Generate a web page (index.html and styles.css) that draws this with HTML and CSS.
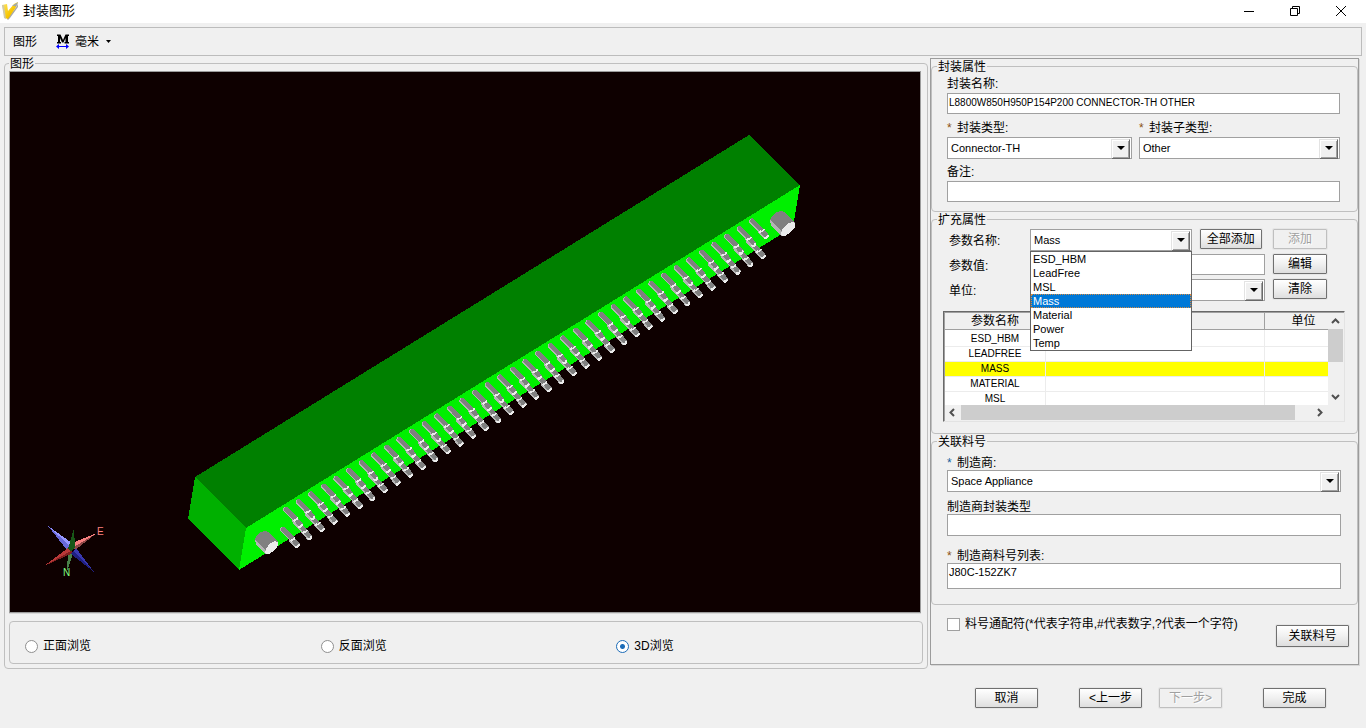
FILE: index.html
```html
<!DOCTYPE html>
<html lang="zh-CN">
<head>
<meta charset="utf-8">
<title>封装图形</title>
<link rel="stylesheet" href="styles.css">
</head>
<body>
<header class="titlebar">
  <svg class="app-icon" width="18" height="19" viewBox="0 0 18 19" aria-hidden="true">
    <defs><linearGradient id="gold" x1="0" y1="0" x2="1" y2="1"><stop offset="0" stop-color="#ffe66a"/><stop offset=".6" stop-color="#f7c600"/><stop offset="1" stop-color="#c98a1c"/></linearGradient></defs>
    <path d="M6 18 16 5l1-3 0 4-8 11-2 2z" fill="#a9a9a9"/>
    <path d="M1 4 6 3l1 7 6-7 4-2-2 5-8 12-3-1z" fill="url(#gold)"/>
    <path d="m1 4 2 13 2 1L3 4z" fill="#cfc9a8"/>
    <path d="m11 5 6-4-2 5-1-1z" fill="#9fa8ae"/>
  </svg>
  <h1 class="title">封装图形</h1>
  <div class="window-controls">
    <button class="window-button" type="button" aria-label="最小化"><svg width="12" height="12" viewBox="0 0 12 12"><path d="M1 6.500h10" stroke="#000"/></svg></button>
    <button class="window-button" type="button" aria-label="还原"><svg width="12" height="12" viewBox="0 0 12 12" fill="none" stroke="#000"><path d="M1.500 3.500h7v7h-7zM3.500 3.500v-2h7v7h-2"/></svg></button>
    <button class="window-button" type="button" aria-label="关闭"><svg width="12" height="12" viewBox="0 0 12 12"><path d="m1 1 10 10M11 1 1 11" stroke="#000"/></svg></button>
  </div>
</header>

<nav class="toolbar">
  <button class="tool" type="button">图形</button>
  <button class="tool" type="button">
    <svg width="13" height="15" viewBox="0 0 13 15" aria-hidden="true">
      <path d="M1 .5h3.500l2.500 5.500 2.500-5.500H13v1.500h-1v6h1v1.500H8.500V8h1V4L7.500 8.500h-1.500L4 4v4h1v1.500H1V8h1V2H1z" fill="#000"/>
      <path d="M1 12.500h11" stroke="#00f"/><path d="m0 12.500 3-2.500v5zM13 12.500 10 10v5z" fill="#00f"/>
    </svg>
    <span>毫米</span>
    <svg width="7" height="4" viewBox="0 0 7 4" aria-hidden="true"><path d="M1 0h5L3.500 3z"/></svg>
  </button>
</nav>

<main class="workspace">
  <fieldset class="group viewer">
    <legend>图形</legend>
    <svg class="scene" viewBox="10 72 910 540" preserveAspectRatio="xMidYMid slice" role="img" aria-label="3D">
      <defs>
        <g id="pin">
          <path d="M8.500 13.500 14.500 10.500 20 17 15 20.500z" fill="#808080"/>
          <path d="M8.500 13.500 10 12.500 16 19.500 15 20.500z" fill="#b4b4b4"/>
          <path d="M14.500 19.500 15.500 18.500 17 18.500 18.500 16.500 20 17.500 19 19.500 17 21H15.500z" fill="#ebebeb"/>
          <path d="M0 2 1.500 0H4L14.500 10.500 10 14 0 4z" fill="#b4b4b4"/>
          <path d="M1 2 2 0H4L14.500 10.500 11 13.500 1 3z" fill="#808080"/>
          <path d="M9.500 13.500 11 12 12.500 12.500 14.500 10 15.500 11 14.500 13 13 13.500 11.500 14.500 10.500 14.500z" fill="#ebebeb"/>
        </g>
        <g id="pins2"><use href="#pin" x="12.600" y="-7.800"/><use href="#pin"/></g>
        <g id="pins4"><use href="#pins2" x="25.200" y="-15.600"/><use href="#pins2"/></g>
        <g id="pins8"><use href="#pins4" x="50.400" y="-31.200"/><use href="#pins4"/></g>
        <g id="pins16"><use href="#pins8" x="100.800" y="-62.400"/><use href="#pins8"/></g>
        <g id="pins32"><use href="#pins16" x="201.600" y="-124.800"/><use href="#pins16"/></g>
        <g id="pin-row"><use href="#pins2" x="453.600" y="-280.800"/><use href="#pins4" x="403.200" y="-249.600"/><use href="#pins32"/></g>
        <g id="stud">
          <path d="m0 9 2-4 4-4 5-1 3 1 11 10-1 4-9 10h-3L1 15z" fill="#808080"/>
          <path d="m0 9 1 6 11 10 1-3z" fill="#b4b4b4"/>
          <path d="m11 23 1-4 5-6 5-2 3 1v4l-4 5-6 4h-3z" fill="#ebebeb"/>
        </g>
      </defs>
      <rect x="-990" y="-428" width="2910" height="1540" fill="#0e0000"/>
      <g shape-rendering="crispEdges">
        <path d="m749 135 51 50-554 343-51-51z" fill="#008000"/>
        <path d="m800 185-7 42-554 343 7-42z" fill="#00f000"/>
        <path d="m195 477 51 51-7 42-51-51z" fill="#00b000"/>
        <use href="#stud" transform="translate(255 531) scale(.920)"/>
        <use href="#stud" x="770" y="211"/>
        <use href="#pin-row" x="280" y="527"/>
        <use href="#pin-row" x="283" y="507"/>
        <path d="m48 526 24 17-5 7z" fill="#6868d8"/><path d="m48 526 24 17-2 3z" fill="#9898ff"/>
        <path d="m97 533-25 10 3 7z" fill="#904848"/><path d="m97 533-25 10 2 4z" fill="#f88080"/>
        <path d="m67 571 1-19 5 2z" fill="#488048"/>
        <path d="m44 566 25-18 4 5z" fill="#802020"/><path d="m44 566 24-18 3 3z" fill="#b83838"/>
        <path d="m94 572-23-18 5-6z" fill="#202080"/><path d="m94 572-20-21 2-3z" fill="#3838b0"/>
        <path d="m74 528 1 20-4 3-3-2z" fill="#185818"/>
      </g>
      <text class="axis axis-east" x="97" y="535">E</text>
      <text class="axis axis-north" x="63" y="576">N</text>
    </svg>
    <div class="view-modes">
      <label class="choice"><input class="radio" type="radio" name="view">正面浏览</label>
      <label class="choice"><input class="radio" type="radio" name="view">反面浏览</label>
      <label class="choice"><input class="radio" type="radio" name="view" checked>3D浏览</label>
    </div>
  </fieldset>

  <section class="properties">
    <fieldset class="group package">
      <legend>封装属性</legend>
      <div class="field"><label for="pkg-name">封装名称:</label><input class="text caps" id="pkg-name" type="text" value="L8800W850H950P154P200 CONNECTOR-TH OTHER"></div>
      <div class="type-row">
        <div class="field"><label for="pkg-type"><span class="required">*</span>封装类型:</label><span class="combo"><select id="pkg-type"><option>Connector-TH</option></select></span></div>
        <div class="field"><label for="pkg-sub"><span class="required">*</span>封装子类型:</label><span class="combo"><select id="pkg-sub"><option>Other</option></select></span></div>
      </div>
      <div class="field"><label for="remark">备注:</label><input class="text" id="remark" type="text"></div>
    </fieldset>

    <fieldset class="group extended">
      <legend>扩充属性</legend>
      <div class="parameters">
        <label for="param-name">参数名称:</label>
        <div class="open-combo">
          <span class="combo"><select id="param-name"><option>Mass</option></select></span>
          <ul class="options" role="listbox" aria-label="参数名称">
            <li role="option">ESD_HBM</li><li role="option">LeadFree</li><li role="option">MSL</li><li class="current" role="option" aria-selected="true">Mass</li><li role="option">Material</li><li role="option">Power</li><li role="option">Temp</li>
          </ul>
        </div>
        <button class="button add-all" type="button">全部添加</button>
        <button class="button" type="button" disabled>添加</button>
        <label for="param-value">参数值:</label>
        <input class="text wide" id="param-value" type="text">
        <button class="button" type="button">编辑</button>
        <label for="unit">单位:</label>
        <span class="combo wide"><select id="unit"><option></option></select></span>
        <button class="button" type="button">清除</button>
      </div>
      <div class="table-frame">
        <div class="table-view">
          <table>
            <colgroup><col class="col-name"><col class="col-value"><col class="col-unit"></colgroup>
            <thead><tr><th>参数名称</th><th></th><th>单位</th></tr></thead>
            <tbody>
              <tr><td>ESD_HBM</td><td></td><td></td></tr>
              <tr><td>LEADFREE</td><td></td><td></td></tr>
              <tr class="marked"><td>MASS</td><td></td><td></td></tr>
              <tr><td>MATERIAL</td><td></td><td></td></tr>
              <tr><td>MSL</td><td></td><td></td></tr>
            </tbody>
          </table>
        </div>
        <div class="scroll-y">
          <svg width="15" height="16" viewBox="0 0 15 16"><path d="m4 10 3.500-3.500L11 10"/></svg>
          <span class="thumb-y"></span>
          <svg width="15" height="16" viewBox="0 0 15 16"><path d="m4 6 3.500 3.500L11 6"/></svg>
        </div>
        <div class="scroll-x">
          <svg width="16" height="15" viewBox="0 0 16 15"><path d="M9 4 5.500 7.500 9 11"/></svg>
          <span class="thumb-x"></span>
          <svg width="16" height="15" viewBox="0 0 16 15"><path d="m6 4 3.500 3.500L6 11"/></svg>
        </div>
      </div>
    </fieldset>

    <fieldset class="group related">
      <legend>关联料号</legend>
      <div class="field"><label for="maker"><span class="required blue">*</span>制造商:</label><span class="combo"><select id="maker"><option>Space Appliance</option></select></span></div>
      <div class="field"><label for="maker-type">制造商封装类型</label><input class="text tall" id="maker-type" type="text"></div>
      <div class="field parts"><label for="parts"><span class="required">*</span>制造商料号列表:</label><textarea class="text" id="parts" rows="1">J80C-152ZK7</textarea></div>
    </fieldset>

    <div class="link-row">
      <label class="choice"><input class="check" type="checkbox">料号通配符(*代表字符串,#代表数字,?代表一个字符)</label>
      <button class="button link-button" type="button">关联料号</button>
    </div>
  </section>
</main>

<footer class="actions">
  <button class="button" type="button">取消</button>
  <div class="steps">
    <button class="button" type="button">&lt;上一步</button>
    <button class="button" type="button" disabled>下一步&gt;</button>
  </div>
  <button class="button" type="button">完成</button>
</footer>
</body>
</html>
```
FILE: styles.css
```css
* { box-sizing: border-box; }
body {
  margin: 0;
  background: #f0f0f0;
  color: #000;
  font: 12px/16px "Liberation Sans", "Noto Sans CJK SC", sans-serif;
}
button, input, select, textarea { font: inherit; color: inherit; margin: 0; }

.titlebar { display: flex; align-items: center; height: 23px; padding: 0 0 2px 1px; background: #fff; }
.title { margin: 0 0 0 4px; font-size: 13px; font-weight: 400; line-height: 20px; }
.window-controls { display: flex; margin-left: auto; padding-right: 2px; }
.window-button { width: 46px; height: 20px; padding: 0; border: 0; background: none; }
.window-button svg { display: block; margin: 0 auto; }

.toolbar { display: flex; align-items: center; gap: 19px; height: 29px; margin: 4px 4px 0; padding: 0 8px; border: 1px solid #bcbcbc; }
.tool { display: flex; align-items: center; gap: 6px; padding: 0; border: 0; background: none; }

.workspace { display: flex; align-items: flex-start; gap: 2px; padding: 0 7px 0 4px; }
.group { min-width: 0; margin: 0; padding: 0; border: 1px solid #bfbfbf; border-radius: 4px; }
.group legend { height: 14px; padding: 0 1px; line-height: 16px; }

.viewer { flex: 1; padding: 1px 4px 4px; }
.scene { display: block; width: calc(100% - 2px); height: 542px; border: 1px solid #9c9c9c; box-shadow: 0 1px #d8d8d8; }
.axis { font: 10px "Liberation Sans", sans-serif; }
.axis-east { fill: #ff8080; }
.axis-north { fill: #80ff80; }
.view-modes { display: grid; grid-template-columns: repeat(3, 1fr); margin-top: 8px; padding: 15px 10px 8px 15px; border: 1px solid #bfbfbf; border-radius: 4px; }
.choice { display: flex; align-items: center; gap: 5px; height: 18px; }
.radio { appearance: none; width: 13px; height: 13px; border: 1px solid #8f8f8f; border-radius: 50%; background: #fff; }
.radio:checked { border-color: #1c6cb8; background: radial-gradient(circle, #1c6cb8 0 2px, #fff 3px); }
.check { appearance: none; width: 13px; height: 13px; border: 1px solid #a0a0a0; background: #fff; }

.properties { width: 429px; margin-top: 2px; border: 1px solid #9c9c9c; box-shadow: 1px 1px #d8d8d8; }
.package { padding: 3px 17px 9px 15px; }
.package legend, .related legend { margin-left: -10px; }
.package .field { gap: 1px; }
.field { display: flex; flex-direction: column; }
.field > label { height: 16px; }
.required { display: inline-block; width: 10px; color: #8a5210; }
.blue { color: #17609c; }
.type-row { display: grid; grid-template-columns: 185fr 201fr; gap: 7px; margin: 6px 0 5px; }
.text { width: 100%; height: 21px; padding: 0 1px 3px; border: 1px solid #a0a0a0; border-radius: 0; background: #fff; font-size: 11px; line-height: 14px; }
.caps { font-size: 10px; }
.tall { height: 22px; }
textarea.text { display: block; height: 26px; padding: 1px; resize: none; overflow: hidden; }

.combo { position: relative; display: block; height: 22px; border: 1px solid #a0a0a0; background: #fff; }
.combo select { appearance: none; display: block; width: 100%; height: 20px; padding: 0 20px 0 3px; border: 0; background: none; font-size: 11px; }
.combo::before { content: ""; position: absolute; top: 1px; right: 1px; width: 17px; height: 18px; border: 1px solid; border-color: #e3e3e3 #696969 #696969 #e3e3e3; background: #f0f0f0; box-shadow: inset 1px 1px #fff, inset -1px -1px #a0a0a0; pointer-events: none; }
.combo::after { content: ""; position: absolute; top: 8px; right: 6px; border: 4px solid transparent; border-top-color: #000; border-bottom: 0; pointer-events: none; }

.extended { padding: 3px 12px 11px 11px; }
.extended legend { margin-left: -6px; }
.parameters { display: grid; grid-template-columns: 81px 161fr 81fr 53px; row-gap: 3px; padding: 0 19px 0 6px; }
.parameters > label { height: 22px; line-height: 24px; }
.parameters > .button { width: 54px; }
.parameters > .add-all { width: 62px; margin-left: 8px; }
.wide { grid-column: 2 / 4; width: calc(100% - 8px); }
.open-combo { position: relative; }
.options { position: absolute; z-index: 2; top: 22px; left: 0; right: 0; margin: 0; padding: 0; border: 1px solid #646464; background: #fff; list-style: none; font-size: 11px; line-height: 14px; }
.options li { padding-left: 2px; }
.options .current { background: #0078d7; color: #fff; outline: 1px dotted #d88a40; outline-offset: -1px; }

.button { height: 20px; padding: 0; border: 1px solid #707070; border-radius: 1px; background: linear-gradient(#fff, #f0f0f0 50%, #dedede); box-shadow: 0 0 0 1px #e6e6e6; line-height: 16px; white-space: nowrap; }
.button:disabled { border-color: #bfbfbf; background: #f0f0f0; color: #a0a0a0; text-shadow: 1px 1px #fff; }

.table-frame { display: grid; grid-template: 92px 16px / 1fr 16px; height: 111px; margin-top: 10px; padding: 1px 0 0 1px; border: 1px solid; border-color: #696969 #e3e3e3 #e3e3e3 #696969; box-shadow: inset 1px 1px #a0a0a0; }
.table-view { overflow: hidden; background: #fff; }
.table-view table { width: 398px; border-collapse: separate; border-spacing: 0; table-layout: fixed; }
.col-name { width: 101px; }
.col-value { width: 219px; }
.col-unit { width: 78px; }
th { height: 17px; padding: 0; border-right: 1px solid #a0a0a0; border-bottom: 1px solid #a0a0a0; background: #f0f0f0; font-weight: 400; line-height: 16px; }
td { height: 15px; padding: 0; border-right: 1px solid #ececec; border-bottom: 1px solid #ececec; font-size: 10px; line-height: 14px; text-align: center; }
tbody tr:first-child td { height: 17px; padding-top: 2px; }
.marked td { background: #ff0; }
.scroll-y { display: flex; flex-direction: column; }
.scroll-y svg, .scroll-x svg { flex: none; fill: none; stroke: #505050; stroke-width: 2; }
.scroll-y svg:last-child { margin-top: auto; }
.thumb-y { width: 15px; height: 33px; background: #cdcdcd; }
.scroll-x { grid-column: 1 / 3; display: flex; padding-right: 16px; }
.thumb-x { flex: 0 1 334px; height: 15px; background: #cdcdcd; }
.scroll-x svg:last-child { margin-left: auto; }

.related { padding: 6px 16px 15px 15px; }
.related .field { margin-bottom: 6px; }
.related .field > label { line-height: 18px; }
.related .parts { margin: 11px 0 0; }

.link-row { display: flex; align-items: flex-start; justify-content: space-between; padding: 10px 9px 17px 16px; }
.link-button { width: 73px; height: 22px; margin-top: 10px; }

.actions { display: flex; justify-content: flex-end; gap: 41px; padding: 19px 40px 20px 0; }
.actions .button { width: 63px; }
.steps { display: flex; gap: 17px; }
```
